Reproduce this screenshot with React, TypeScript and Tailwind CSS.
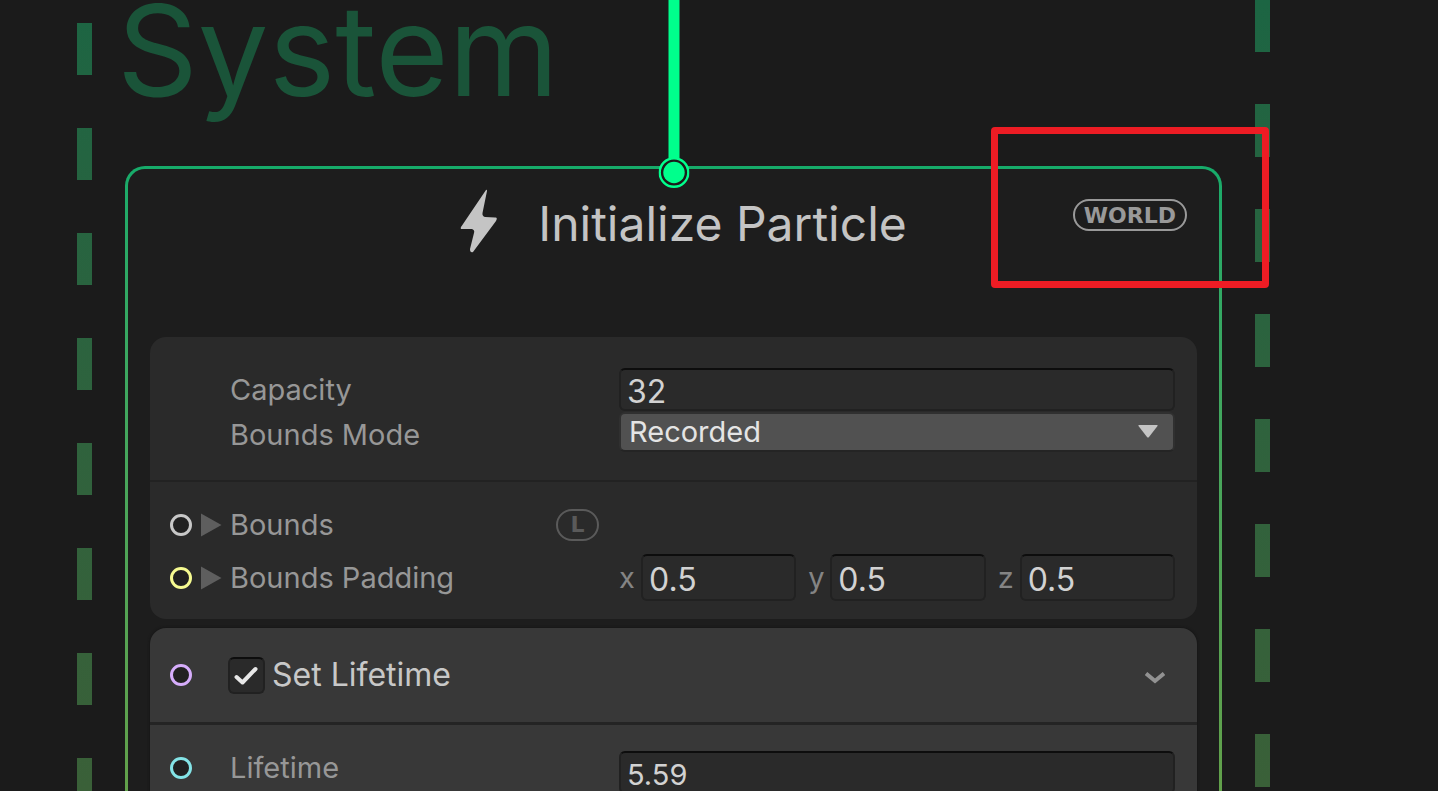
import type { ReactNode } from "react";

const fieldClass =
  "w-full min-w-0 rounded-md border-2 border-[#212121] border-t-[#0d0d0d] bg-[#2a2a2a] px-1.5 pt-1 text-[#d2d2d2] outline-none";

function Port({ className }: { className: string }) {
  return <span className={`size-[22px] shrink-0 rounded-full border-3 bg-[#212121] ${className}`} />;
}

function Foldout({ label }: { label: string }) {
  return (
    <button type="button" aria-label={`Expand ${label}`} className="mr-2 ml-2 h-6 w-[22px] shrink-0">
      <svg viewBox="0 0 22 24" className="h-6 w-[22px] fill-[#5e5e5e]">
        <path d="M1 0.5 21.5 12 1 23.5Z" />
      </svg>
    </button>
  );
}

function Row({ label, children }: { label: ReactNode; children?: ReactNode }) {
  return (
    <div className="flex items-center">
      <div className="flex w-[469px] shrink-0 items-center">{label}</div>
      <div className="min-w-0 flex-1">{children}</div>
    </div>
  );
}

function AxisField({ axis }: { axis: string }) {
  return (
    <label className="flex min-w-0 flex-1 items-center">
      <span className="w-[22px] shrink-0 text-[#848484]">{axis}</span>
      <input type="text" defaultValue="0.5" className={`${fieldClass} h-[47px] text-[32px]`} />
    </label>
  );
}

function ContextNode() {
  return (
    <section className="relative flex flex-1 flex-col rounded-t-[20px] bg-linear-to-b from-[#16ab6a] to-[#62a04a] px-[3px] pt-[3px]">
      <div className="flex flex-1 flex-col rounded-t-[17px] bg-[#1d1d1d]">
        <header className="grid h-[168px] grid-cols-[1fr_auto_1fr] items-start pr-8 pl-[52px]">
          <div className="col-start-2 flex items-center pt-5">
            <svg viewBox="0 0 38 64" className="h-16 w-[38px] fill-[#c4c4c4]">
              <path d="M26 1 1 38Q0 40 2 40L12 40Q15 41 14 44L10 60Q10 64 13 63L36 32Q38 28 35 28.500L25 28Q22 27 22.500 24L27 2Q27 0 26 1Z" />
            </svg>
            <h2 className="pt-1.5 pl-10 text-5xl whitespace-nowrap text-[#c4c4c4]">Initialize Particle</h2>
          </div>
          <div className="mt-[30px] flex h-8 items-center justify-self-end rounded-full border-2 border-[#999] px-[9px] pt-px font-['DejaVu_Sans',sans-serif] text-[22px] leading-none font-bold text-[#999]">
            WORLD
          </div>
        </header>

        <div className="mx-[22px] rounded-2xl bg-[#2a2a2a]">
          <div className="border-b-2 border-[#222] pt-[31px] pr-[22px] pb-7">
            <Row label={<label htmlFor="capacity" className="pl-20">Capacity</label>}>
              <input id="capacity" type="text" defaultValue="32" className={`${fieldClass} block h-[43px] text-[32px]`} />
            </Row>
            <Row label={<label htmlFor="bounds-mode" className="pt-1.5 pl-20">Bounds Mode</label>}>
              <div className="relative pt-px">
                <select
                  id="bounds-mode"
                  className="block h-10 w-full appearance-none rounded-md border-2 border-[#303030] border-b-[#242424] bg-[#515151] px-2 leading-9 text-[#e4e4e4] outline-none"
                >
                  <option>Recorded</option>
                  <option>Manual</option>
                  <option>Automatic</option>
                </select>
                <svg viewBox="0 0 20 13" className="pointer-events-none absolute top-[14px] right-[17px] h-[13px] w-5 fill-[#c4c4c4]">
                  <path d="M1 0H19Q20 0 19.500 1L11 12Q10 13 9 12L0.500 1Q0 0 1 0Z" />
                </svg>
              </div>
            </Row>
          </div>
          <div className="flex flex-col gap-2 pt-[21px] pr-[22px] pb-[18px] pl-5">
            <div className="flex h-[43px] items-center">
              <Port className="border-[#c8c8c8]" />
              <Foldout label="Bounds" />
              <span className="w-[326px]">Bounds</span>
              <span className="flex h-8 w-[43px] items-center justify-center rounded-full border-2 border-[#5a5a5a] pt-px font-['DejaVu_Sans',sans-serif] text-[22px] leading-none font-bold text-[#5a5a5a]">
                L
              </span>
            </div>
            <div className="flex items-center">
              <div className="flex w-[449px] shrink-0 items-center">
                <Port className="border-[#f6fb91]" />
                <Foldout label="Bounds Padding" />
                <span>Bounds Padding</span>
              </div>
              <div className="flex min-w-0 flex-1 gap-3">
                <AxisField axis="x" />
                <AxisField axis="y" />
                <AxisField axis="z" />
              </div>
            </div>
          </div>
        </div>

        <div className="mx-[22px] mt-[9px] flex-1 rounded-t-2xl bg-[#383838] shadow-[0_0_3px_#111]">
          <div className="flex h-[97px] items-center border-b-3 border-[#242424] pr-8 pl-5">
            <Port className="border-[#d6adfb]" />
            <label className="ml-9 flex items-center gap-[7px] text-[32px] text-[#c8c8c8]">
              <span className="relative block size-[37px]">
                <input
                  type="checkbox"
                  defaultChecked
                  className="peer block size-[37px] appearance-none rounded-md border-2 border-[#212121] border-t-[#0d0d0d] bg-[#2a2a2a]"
                />
                <svg
                  viewBox="0 0 37 37"
                  className="pointer-events-none absolute inset-0 hidden size-[37px] fill-none stroke-[#e8e8e8] stroke-4 peer-checked:block"
                  strokeLinecap="round"
                  strokeLinejoin="round"
                >
                  <path d="M8.500 20 14.500 25.500 27.500 12" />
                </svg>
              </span>
              Set Lifetime
            </label>
            <button type="button" aria-label="Collapse Set Lifetime" className="ml-auto pt-1.5">
              <svg viewBox="0 0 20 12" className="h-3 w-5 fill-none stroke-[#929292]" strokeWidth="4">
                <path d="M1 1.500 10 9 19 1.500" />
              </svg>
            </button>
          </div>
          <div className="pt-[26px] pr-[22px]">
            <Row
              label={
                <div className="flex items-center pb-2.5 pl-5">
                  <Port className="border-[#84e4e7]" />
                  <label htmlFor="lifetime" className="pl-[38px]">Lifetime</label>
                </div>
              }
            >
              <input id="lifetime" type="text" defaultValue="5.59" className={`${fieldClass} block h-[43px]`} />
            </Row>
          </div>
        </div>
      </div>

      <div className="absolute -top-[166px] left-1/2 h-[158px] w-[11px] -translate-x-1/2 bg-[#00ff8c]" />
      <svg viewBox="0 0 31 31" className="absolute -top-[9px] left-1/2 size-[31px] -translate-x-1/2">
        <circle cx="15.5" cy="15.5" r="14.3" fill="#1b1b1b" stroke="#00ff8c" strokeWidth="2.400" />
        <circle cx="15.5" cy="15.5" r="10.700" fill="#00ff8c" />
      </svg>
    </section>
  );
}

export default function App() {
  return (
    <main className="relative flex h-screen overflow-hidden bg-[#1b1b1b] pr-[168px] pl-[77px] font-[Inter,sans-serif] text-[29px] leading-8 text-[#979797]">
      <div className="w-[15px] shrink-0 bg-linear-to-b from-[#1c6543] to-[#3a6038] [mask-image:repeating-linear-gradient(transparent_0px,transparent_23px,black_23px,black_75px,transparent_75px,transparent_105px)]" />
      <div className="flex min-w-0 flex-1 flex-col px-[33px]">
        <h1 className="-ml-2 h-[166px] shrink-0 text-[126px] leading-[100px] text-[#1a5439]">System</h1>
        <ContextNode />
      </div>
      <div className="w-[15px] shrink-0 bg-linear-to-b from-[#1c6543] to-[#3a6038] [mask-image:repeating-linear-gradient(black_0px,black_52px,transparent_52px,transparent_104px,black_104px,black_105px)]" />
      <div className="pointer-events-none absolute top-[127px] right-[169px] h-[161px] w-[278px] rounded-sm border-[7px] border-[#ed1c24]" />
    </main>
  );
}
